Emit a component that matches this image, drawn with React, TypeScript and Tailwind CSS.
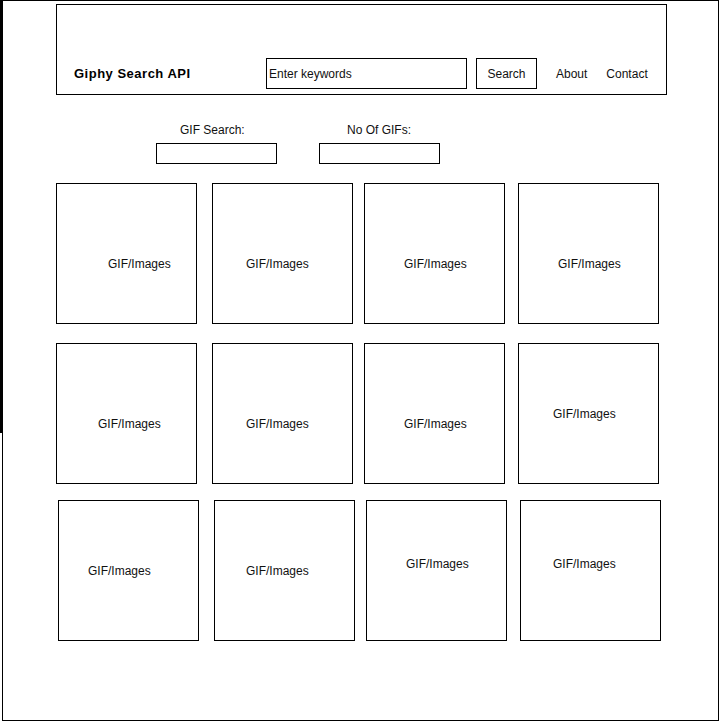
import React from "react";

type Cell = { gap: string; pad: string };

const rows: { cls: string; cells: Cell[] }[] = [
  {
    cls: "mt-[19px] ml-[53px]",
    cells: [
      { gap: "", pad: "pl-[51px] pt-[73px]" },
      { gap: "ml-[15px]", pad: "pl-[33px] pt-[73px]" },
      { gap: "ml-[11px]", pad: "pl-[39px] pt-[73px]" },
      { gap: "ml-[13px]", pad: "pl-[39px] pt-[73px]" },
    ],
  },
  {
    cls: "mt-[19px] ml-[53px]",
    cells: [
      { gap: "", pad: "pl-[41px] pt-[73px]" },
      { gap: "ml-[15px]", pad: "pl-[33px] pt-[73px]" },
      { gap: "ml-[11px]", pad: "pl-[39px] pt-[73px]" },
      { gap: "ml-[13px]", pad: "pl-[34px] pt-[63px]" },
    ],
  },
  {
    cls: "mt-[16px] ml-[55px]",
    cells: [
      { gap: "", pad: "pl-[29px] pt-[63px]" },
      { gap: "ml-[15px]", pad: "pl-[31px] pt-[63px]" },
      { gap: "ml-[11px]", pad: "pl-[39px] pt-[56px]" },
      { gap: "ml-[13px]", pad: "pl-[32px] pt-[56px]" },
    ],
  },
];

export default function App() {
  return (
    <div className="w-[720px] h-[722px] bg-white font-['Liberation_Sans',Arial,sans-serif] text-[#111]">
      <div className="relative ml-[2px] w-[717px] h-[721px] border border-black">
        <div className="absolute left-[-3px] top-[-1px] w-[3px] h-[433px] bg-black" />

        {/* Header */}
        <div className="mt-[3px] ml-[53px] w-[611px] h-[91px] border border-black flex items-end pb-[5px]">
          <div className="flex items-center h-[31px] w-full">
            <div className="w-[209px] pl-[17px] pt-[1px] text-[13px] leading-[16px] font-bold tracking-[0.5px] text-black">
              Giphy Search API
            </div>
            <div className="w-[201px] h-[31px] border border-black flex items-center pl-[2px] text-[12px] leading-[14px]">
              Enter keywords
            </div>
            <div className="ml-[9px] w-[61px] h-[31px] border border-black flex items-center justify-center text-[12px] leading-[14px]">
              Search
            </div>
            <div className="ml-[19px] text-[12px] leading-[14px]">About</div>
            <div className="ml-[19px] text-[12px] leading-[14px]">Contact</div>
          </div>
        </div>

        {/* Search fields */}
        <div className="mt-[28px] ml-[153px] flex">
          <div className="w-[121px]">
            <div className="pl-[24px] text-[12px] leading-[14px]">GIF Search:</div>
            <div className="mt-[6px] h-[21px] border border-black" />
          </div>
          <div className="ml-[42px] w-[121px]">
            <div className="pl-[28px] text-[12px] leading-[14px]">No Of GIFs:</div>
            <div className="mt-[6px] h-[21px] border border-black" />
          </div>
        </div>

        {/* Grid */}
        {rows.map((row, ri) => (
          <div key={ri} className={`flex ${row.cls}`}>
            {row.cells.map((c, ci) => (
              <div
                key={ci}
                className={`w-[141px] h-[141px] border border-black text-[12px] leading-[14px] ${c.gap} ${c.pad}`}
              >
                GIF/Images
              </div>
            ))}
          </div>
        ))}
      </div>
    </div>
  );
}
